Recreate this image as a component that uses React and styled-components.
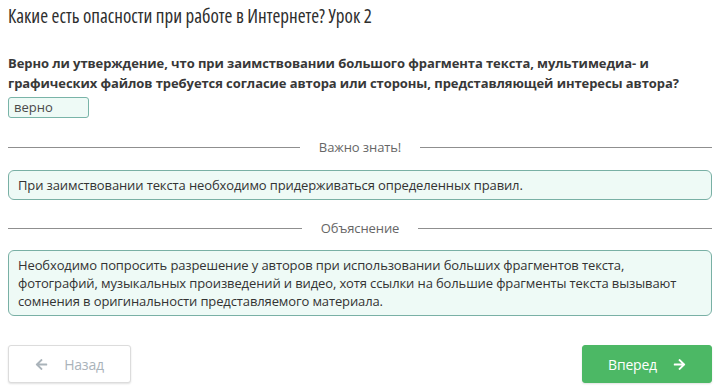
import React from 'react';
import styled, { createGlobalStyle } from 'styled-components';
import { FaArrowLeft, FaArrowRight } from 'react-icons/fa';

const Global = createGlobalStyle`
    body {
        margin: 0;
        background: #fff;
        font-family: "Open Sans", "Liberation Sans", sans-serif;
        color: #333;
    }
`

const Page = styled.div`
    width: 720px;
    height: 391px;
    padding: 0 8px;
    box-sizing: border-box;
    display: flex;
    flex-direction: column;
`

const Title = styled.h1`
    margin: 3px 0 0;
    font-size: 19px;
    font-weight: 400;
    font-stretch: 75%;
    line-height: 26px;
    color: #2e2e2e;
`

const Question = styled.div`
    margin-top: 24px;
    font-size: 13px;
    font-weight: 700;
    letter-spacing: -0.08px;
    line-height: 20px;
    color: #383838;
`

const Answer = styled.div`
    margin-top: 4px;
    width: 81px;
    height: 21px;
    box-sizing: border-box;
    padding: 0 5px;
    border: 1px solid #79b4a8;
    border-radius: 3px;
    background: #eefaf6;
    font-size: 13px;
    line-height: 19px;
    color: #4a4a4a;
`

const Divider = styled.div`
    display: flex;
    align-items: center;
    gap: 19px;
    margin-top: ${p => p.top}px;
    font-size: 13px;
    letter-spacing: -0.1px;
    color: #666;
    line-height: 18px;

    &::before, &::after {
        content: "";
        flex: 1;
        height: 1px;
        background: #8f8f8f;
    }
`

const Note = styled.div`
    margin-top: ${p => p.top}px;
    padding: 5px 9px;
    border: 1px solid #79b0a5;
    border-radius: 6px;
    background: #eefaf6;
    font-size: 13px;
    letter-spacing: -0.12px;
    line-height: 18px;
    color: #333;
`

const Footer = styled.div`
    margin-top: auto;
    margin-bottom: 8px;
    display: flex;
    justify-content: space-between;
`

const NavButton = styled.div`
    display: flex;
    align-items: center;
    justify-content: center;
    gap: 16px;
    width: ${p => p.primary ? 130 : 123}px;
    height: 38px;
    box-sizing: border-box;
    border-radius: 3px;
    border: 1px solid ${p => p.primary ? '#4cb865' : '#dcdcdc'};
    background: ${p => p.primary ? '#4cb865' : '#fff'};
    color: ${p => p.primary ? '#fff' : '#aab3ba'};
    font-size: 14px;
    letter-spacing: -0.2px;
    box-shadow: 0 1px 2px rgba(0,0,0,0.12);

    svg {
        width: 13px;
        height: 13px;
    }
`

const App = () => {
    return (
        <Page>
            <Global />
            <Title>Какие есть опасности при работе в Интернете? Урок 2</Title>
            <Question>
                Верно ли утверждение, что при заимствовании большого фрагмента текста, мультимедиа- и
                графических файлов требуется согласие автора или стороны, представляющей интересы автора?
            </Question>
            <Answer>верно</Answer>
            <Divider top={20}>Важно знать!</Divider>
            <Note top={14}>При заимствовании текста необходимо придерживаться определенных правил.</Note>
            <Divider top={19}>Объяснение</Divider>
            <Note top={13}>
                Необходимо попросить разрешение у авторов при использовании больших фрагментов текста,
                фотографий, музыкальных произведений и видео, хотя ссылки на большие фрагменты текста вызывают
                сомнения в оригинальности представляемого материала.
            </Note>
            <Footer>
                <NavButton>
                    <FaArrowLeft />
                    Назад
                </NavButton>
                <NavButton primary>
                    Вперед
                    <FaArrowRight />
                </NavButton>
            </Footer>
        </Page>
    );
};

export default App;
